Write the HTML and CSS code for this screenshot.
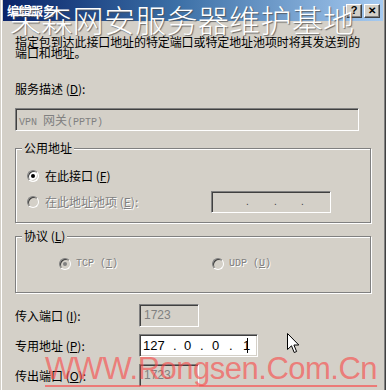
FILE: index.html
```html
<!DOCTYPE html>
<html>
<head>
<meta charset="utf-8">
<link rel="stylesheet" href="styles.css">
</head>
<body>
<div class="window">
  <div class="titlebar">
    <span class="title">编辑服务</span>
    <div class="tbtns">
      <span class="tbtn q">?</span>
      <span class="tbtn x">✕</span>
    </div>
  </div>
  <div class="content">
    <div class="desc">指定包到达此接口地址的特定端口或特定地址池项时将其发送到的<br>端口和地址。</div>
    <div class="lbl-desc">服务描述 (<u>D</u>):</div>
    <div class="field wide disabled"><span class="mono">VPN <span class="cjk">网关</span>(PPTP)</span></div>

    <div class="group g1">
      <span class="legend">公用地址</span>
      <div class="radio-row r1">
        <span class="radio checked"></span><span class="rtext">在此接口 (<u>F</u>)</span>
      </div>
      <div class="radio-row r2">
        <span class="radio dis"></span><span class="rtext distext pool">在此地址池项 (<u>E</u>):</span>
        <div class="field ipbox disabled"><span class="ipdot d1">.</span><span class="ipdot d2">.</span><span class="ipdot d3">.</span></div>
      </div>
    </div>

    <div class="group g2">
      <span class="legend">协议 (<u>L</u>)</span>
      <div class="radio-row r3">
        <div class="ropt tcp"><span class="radio dis checked"></span><span class="rtext distext mono">TCP (<u>T</u>)</span></div>
        <div class="ropt"><span class="radio dis"></span><span class="rtext distext mono">UDP (<u>U</u>)</span></div>
      </div>
    </div>

    <div class="row first">
      <span class="rlabel">传入端口 (<u>I</u>):</span>
      <div class="field port disabled"><span class="num">1723</span></div>
    </div>
    <div class="row">
      <span class="rlabel">专用地址 (<u>P</u>):</span>
      <div class="field ip">
        <span class="s1">127</span><span class="s2">.</span><span class="s3">0</span><span class="s4">.</span><span class="s5">0</span><span class="s6">.</span><span class="s7">1</span><span class="caret"></span>
      </div>
    </div>
    <div class="row">
      <span class="rlabel">传出端口 (<u>O</u>):</span>
      <div class="field port disabled"><span class="num">1723</span></div>
    </div>
  </div>

  <div class="wm-cn">荣森网安服务器维护基地</div>
  <div class="wm-en">WWW.Rongsen.Com.Cn</div>
  <svg class="cursor" width="13" height="21" viewBox="0 0 13 21">
    <path d="M0.5 0.5 L0.5 16.5 L4.5 12.8 L7.2 19.5 L9.6 18.5 L6.9 12 L11.8 12 Z" fill="#fff" stroke="#000" stroke-width="1"/>
  </svg>
</div>
</body>
</html>
```

FILE: styles.css
```css
* { box-sizing: border-box; }
html, body { margin: 0; padding: 0; }
body {
  width: 386px; height: 390px; overflow: hidden;
  background: #D4D0C8;
  font-family: "Noto Sans CJK SC", "Liberation Sans", sans-serif;
  font-size: 12px; color: #000;
}
u { text-decoration: underline; }
.window {
  position: relative;
  width: 386px; height: 390px;
  background: #D4D0C8;
  border-left: 1px solid #D4D0C8;
  border-right: 1px solid #404040;
  box-shadow: inset 1px 0 #fff, inset -1px 0 #808080;
  padding: 0 2px;
}
.titlebar {
  height: 21px;
  background: linear-gradient(to right, #0A246A 0%, #3A6EA5 45%, #A6CAF0 100%);
  display: flex; align-items: center; justify-content: space-between;
  padding: 0 3px 0 4px;
}
.title { color: #fff; font-weight: bold; font-size: 12px; line-height: 14px; }
.tbtns { display: flex; gap: 2px; }
.tbtn {
  width: 16px; height: 14px;
  background: #D4D0C8;
  border: 1px solid; border-color: #fff #404040 #404040 #fff;
  box-shadow: inset -1px -1px #808080;
  font-family: "Liberation Sans", sans-serif; font-weight: bold;
  font-size: 11px; line-height: 11px; text-align: center; color: #000;
}
.tbtn.x { font-size: 10px; line-height: 12px; }
.content { padding: 15px 0 0 12px; }
.desc { line-height: 11px; font-size: 12px; letter-spacing: -0.1px; }
.lbl-desc { margin-top: 24px; line-height: 14px; }
.field {
  height: 23px;
  border: 1px solid; border-color: #808080 #fff #fff #808080;
  box-shadow: inset 1px 1px #404040, inset -1px -1px #D4D0C8;
  background: #fff;
  display: flex; align-items: center;
}
.field.disabled { background: #D4D0C8; }
.wide { margin-top: 12px; width: 344px; padding-left: 3px; }
.mono { font-family: "Liberation Mono", "Noto Sans CJK SC", monospace; font-size: 10px; color: #808080; }
.cjk { font-family: "Noto Sans CJK SC", sans-serif; font-size: 12px; }
.group {
  width: 356px;
  border: 1px solid #808080;
  box-shadow: inset 1px 1px #fff, 1px 1px #fff;
  padding-left: 11px;
}
.legend {
  display: block; width: fit-content;
  margin-top: -8px; margin-left: -5px;
  padding: 0 2px;
  background: #D4D0C8;
  line-height: 14px; height: 14px;
}
.g1 { margin-top: 17px; height: 75px; }
.g2 { margin-top: 13px; height: 57px; }
.radio-row { display: flex; align-items: center; }
.r1 { margin-top: 13px; height: 16px; }
.r2 { margin-top: 7px; height: 22px; }
.r3 { margin-top: 13px; height: 16px; padding-left: 32px; }
.ropt { display: flex; align-items: center; }
.tcp { width: 153px; }
.radio {
  position: relative;
  width: 12px; height: 12px; flex: none;
  border-radius: 50%;
  border: 1px solid; border-color: #808080 #fff #fff #808080;
  box-shadow: inset 1px 1px #404040, inset -1px -1px #D4D0C8;
  background: #fff;
}
.radio.dis { background: #D4D0C8; }
.radio.checked::after {
  content: ""; position: absolute;
  left: 3px; top: 3px; width: 4px; height: 4px;
  border-radius: 50%; background: #000;
}
.radio.dis.checked::after { background: #808080; }
.rtext { margin-left: 6px; line-height: 14px; }
.rtext.pool { width: 166px; flex: none; }
.ropt .rtext { margin-left: 5px; }
.distext { color: #808080; text-shadow: 1px 1px #fff; }
.ipbox { width: 120px; height: 22px; position: relative; }
.ipdot { color: #404040; font-family: "Liberation Sans", sans-serif; font-size: 10px; position: absolute; top: 4px; }
.d1 { left: 34px; } .d2 { left: 62px; } .d3 { left: 89px; }
.row { display: flex; align-items: center; height: 23px; margin-top: 7px; }
.row.first { margin-top: 11px; }
.rlabel { width: 124px; line-height: 14px; }
.port { width: 60px; align-items: flex-start; padding: 3px 0 0 4px; }
.num { font-family: "Liberation Sans", sans-serif; font-size: 12px; color: #808080; line-height: 14px; }
.field.ip { width: 119px; padding-left: 3px; font-family: "Liberation Sans", sans-serif; font-size: 13px; }
.ip span { display: inline-block; line-height: 15px; }
.s1 { width: 30px; } .s2 { width: 11px; } .s3 { width: 16px; } .s4 { width: 12px; }
.s5 { width: 17px; } .s6 { width: 14px; } .s7 { width: 4px; }
.caret { width: 1px; height: 15px; background: #000; }
.wm-cn {
  position: absolute; left: 9px; top: 1px;
  font-family: "Noto Sans CJK SC", sans-serif; font-weight: 300;
  font-size: 31px; line-height: 36px; letter-spacing: 0.3px;
  color: #fff; text-shadow: 1px 1px 1px rgba(80,80,80,0.8);
  white-space: nowrap;
}
.wm-en {
  position: absolute; left: 44px; top: 353px;
  font-family: "Liberation Sans", sans-serif;
  font-size: 31px; line-height: 31px; letter-spacing: -0.5px;
  color: rgba(250, 70, 70, 0.62);
  text-decoration: underline; text-decoration-thickness: 2px; text-underline-offset: 6px;
  white-space: nowrap;
}
.cursor { position: absolute; left: 286px; top: 333px; }
```
